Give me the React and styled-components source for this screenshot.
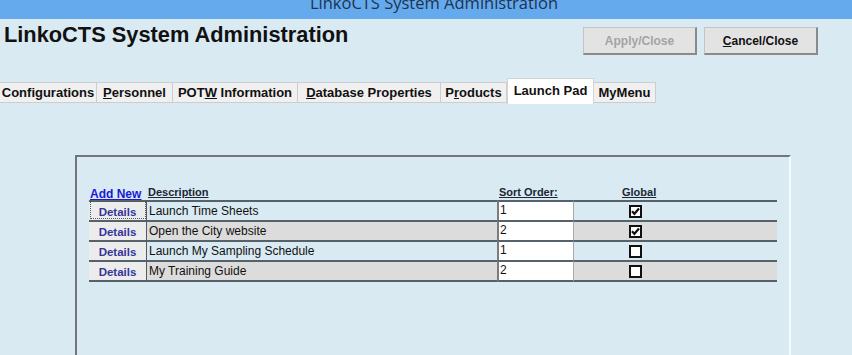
import React from 'react';
import styled, { createGlobalStyle, css } from 'styled-components';

const GlobalStyle = createGlobalStyle`
  body {
    margin: 0;
    background: #d9eaf3;
    font-family: "Liberation Sans", Arial, sans-serif;
    overflow: hidden;
  }
`;

const TitleBar = styled.div`
  height: 19px;
  background: #66aaee;
  display: flex;
  justify-content: center;
  align-items: flex-end;
  overflow: hidden;
`;

const TitleText = styled.div`
  font-family: "Open Sans", "Liberation Sans", sans-serif;
  font-size: 16.5px;
  line-height: 20px;
  color: #1c3450;
  margin-bottom: 6px;
  padding-left: 16px;
  white-space: nowrap;
`;

const Header = styled.div`
  display: flex;
  justify-content: space-between;
  align-items: flex-start;
  padding: 4px 34px 0 4px;
  height: 55px;
`;

const Heading = styled.h1`
  margin: 0;
  font-size: 21.8px;
  font-weight: bold;
  color: #111;
  line-height: 24px;
`;

const ButtonRow = styled.div`
  display: flex;
  gap: 7px;
  margin-top: 4px;
`;

const WinButton = styled.button`
  width: 114px;
  height: 28px;
  background: #e3e3e3;
  border: 1px solid #c4c4c4;
  border-right: 2px solid #8a8a8a;
  border-bottom: 2px solid #8a8a8a;
  font-family: "Liberation Sans", Arial, sans-serif;
  font-size: 12px;
  font-weight: bold;
  color: ${p => (p.disabled ? '#a3a3a3' : '#111')};
  padding: 0;
  u { text-decoration: underline; }
`;

const Tabs = styled.div`
  display: flex;
  align-items: flex-end;
  height: 26px;
`;

const Tab = styled.div`
  height: 21px;
  width: ${p => p.w}px;
  box-sizing: border-box;
  display: flex;
  align-items: center;
  justify-content: center;
  background: #f0f0f0;
  border: 1px solid #cdcdcd;
  border-left: none;
  font-size: 13px;
  font-weight: bold;
  color: #111;
  white-space: nowrap;
  margin-bottom: 1px;
  ${p => p.active && css`
    height: 26px;
    margin-bottom: 0;
    background: #fff;
    border: 1px solid #d4d4d4;
    border-bottom: none;
    align-items: flex-start;
    padding-top: 4px;
  `}
`;

const Panel = styled.div`
  margin: 51px 0 0 75px;
  width: 700px;
  height: 220px;
  border-top: 2px solid #6f777c;
  border-left: 2px solid #6f777c;
  border-right: 2px solid #f4f9fc;
  padding: 26px 0 0 12px;
`;

const Grid = styled.div`
  display: grid;
  grid-template-columns: 58px 350px 77px 203px;
  width: 688px;
`;

const HeadCell = styled.div`
  height: 15px;
  font-size: 11px;
  font-weight: bold;
  color: #1b2633;
  text-decoration: underline;
  padding-left: ${p => p.pad || 1}px;
  display: flex;
  align-items: flex-end;
  padding-bottom: 2px;
`;

const AddNew = styled.a`
  font-size: 12px;
  font-weight: bold;
  color: #1a1ad6;
  text-decoration: underline;
  margin-bottom: -3px;
`;

const Cell = styled.div`
  height: 18px;
  border-top: 2px solid #56616a;
  background: ${p => (p.shade ? '#dcdcdc' : 'transparent')};
  font-size: 12px;
  color: #111;
  display: flex;
  align-items: center;
  ${p => p.last && css`border-bottom: 2px solid #56616a;`}
`;

const DetailsCell = styled(Cell)`
  background: #ececec;
  border-right: 1px solid #4f5a62;
  justify-content: center;
  ${p => p.focus && css`
    outline: 1px dotted #555;
    outline-offset: -2px;
  `}
`;

const DetailsBtn = styled.span`
  font-size: 11.5px;
  font-weight: bold;
  color: #35369a;
  margin-top: 2px;
`;

const DescCell = styled(Cell)`
  padding-left: 2px;
`;

const SortCell = styled(Cell)`
  background: #fff;
  border-left: 2px solid #7c7c7c;
  border-right: 1px solid #a9a9a9;
  padding-left: 1px;
  align-items: flex-start;
  line-height: 16px;
`;

const GlobalCell = styled(Cell)`
  padding-left: 55px;
`;

const Check = ({ checked }) => (
  <svg width="13" height="13" viewBox="0 0 13 13">
    <rect x="1" y="1" width="11" height="11" fill="#fff" stroke="#111" strokeWidth="2" />
    {checked && (
      <path d="M3 6.2 L5.4 8.8 L10 3.6" fill="none" stroke="#111" strokeWidth="2.2" />
    )}
  </svg>
);

const tabs = [
  { label: <span>Configurations</span>, w: 97 },
  { label: <span><u>P</u>ersonnel</span>, w: 76 },
  { label: <span>POT<u>W</u> Information</span>, w: 125 },
  { label: <span><u>D</u>atabase Properties</span>, w: 143 },
  { label: <span>P<u>r</u>oducts</span>, w: 66 },
  { label: <span>Launch Pad</span>, w: 87, active: true },
  { label: <span>MyMenu</span>, w: 62 },
];

const rows = [
  { desc: 'Launch Time Sheets', sort: '1', global: true },
  { desc: 'Open the City website', sort: '2', global: true },
  { desc: 'Launch My Sampling Schedule', sort: '1', global: false },
  { desc: 'My Training Guide', sort: '2', global: false },
];

export default function App() {
  return (
    <>
      <GlobalStyle />
      <TitleBar>
        <TitleText>LinkoCTS System Administration</TitleText>
      </TitleBar>
      <Header>
        <Heading>LinkoCTS System Administration</Heading>
        <ButtonRow>
          <WinButton disabled>Apply/Close</WinButton>
          <WinButton><u>C</u>ancel/Close</WinButton>
        </ButtonRow>
      </Header>
      <Tabs>
        {tabs.map((t, i) => (
          <Tab key={i} w={t.w} active={t.active}>{t.label}</Tab>
        ))}
      </Tabs>
      <Panel>
        <Grid>
          <HeadCell><AddNew>Add New</AddNew></HeadCell>
          <HeadCell>Description</HeadCell>
          <HeadCell pad={2}>Sort Order:</HeadCell>
          <HeadCell pad={48}>Global</HeadCell>
          {rows.map((r, i) => {
            const shade = i % 2 === 1;
            const last = i === rows.length - 1;
            return (
              <React.Fragment key={i}>
                <DetailsCell last={last} focus={i === 0}><DetailsBtn>Details</DetailsBtn></DetailsCell>
                <DescCell shade={shade} last={last}>{r.desc}</DescCell>
                <SortCell last={last}>{r.sort}</SortCell>
                <GlobalCell shade={shade} last={last}><Check checked={r.global} /></GlobalCell>
              </React.Fragment>
            );
          })}
        </Grid>
      </Panel>
    </>
  );
}
